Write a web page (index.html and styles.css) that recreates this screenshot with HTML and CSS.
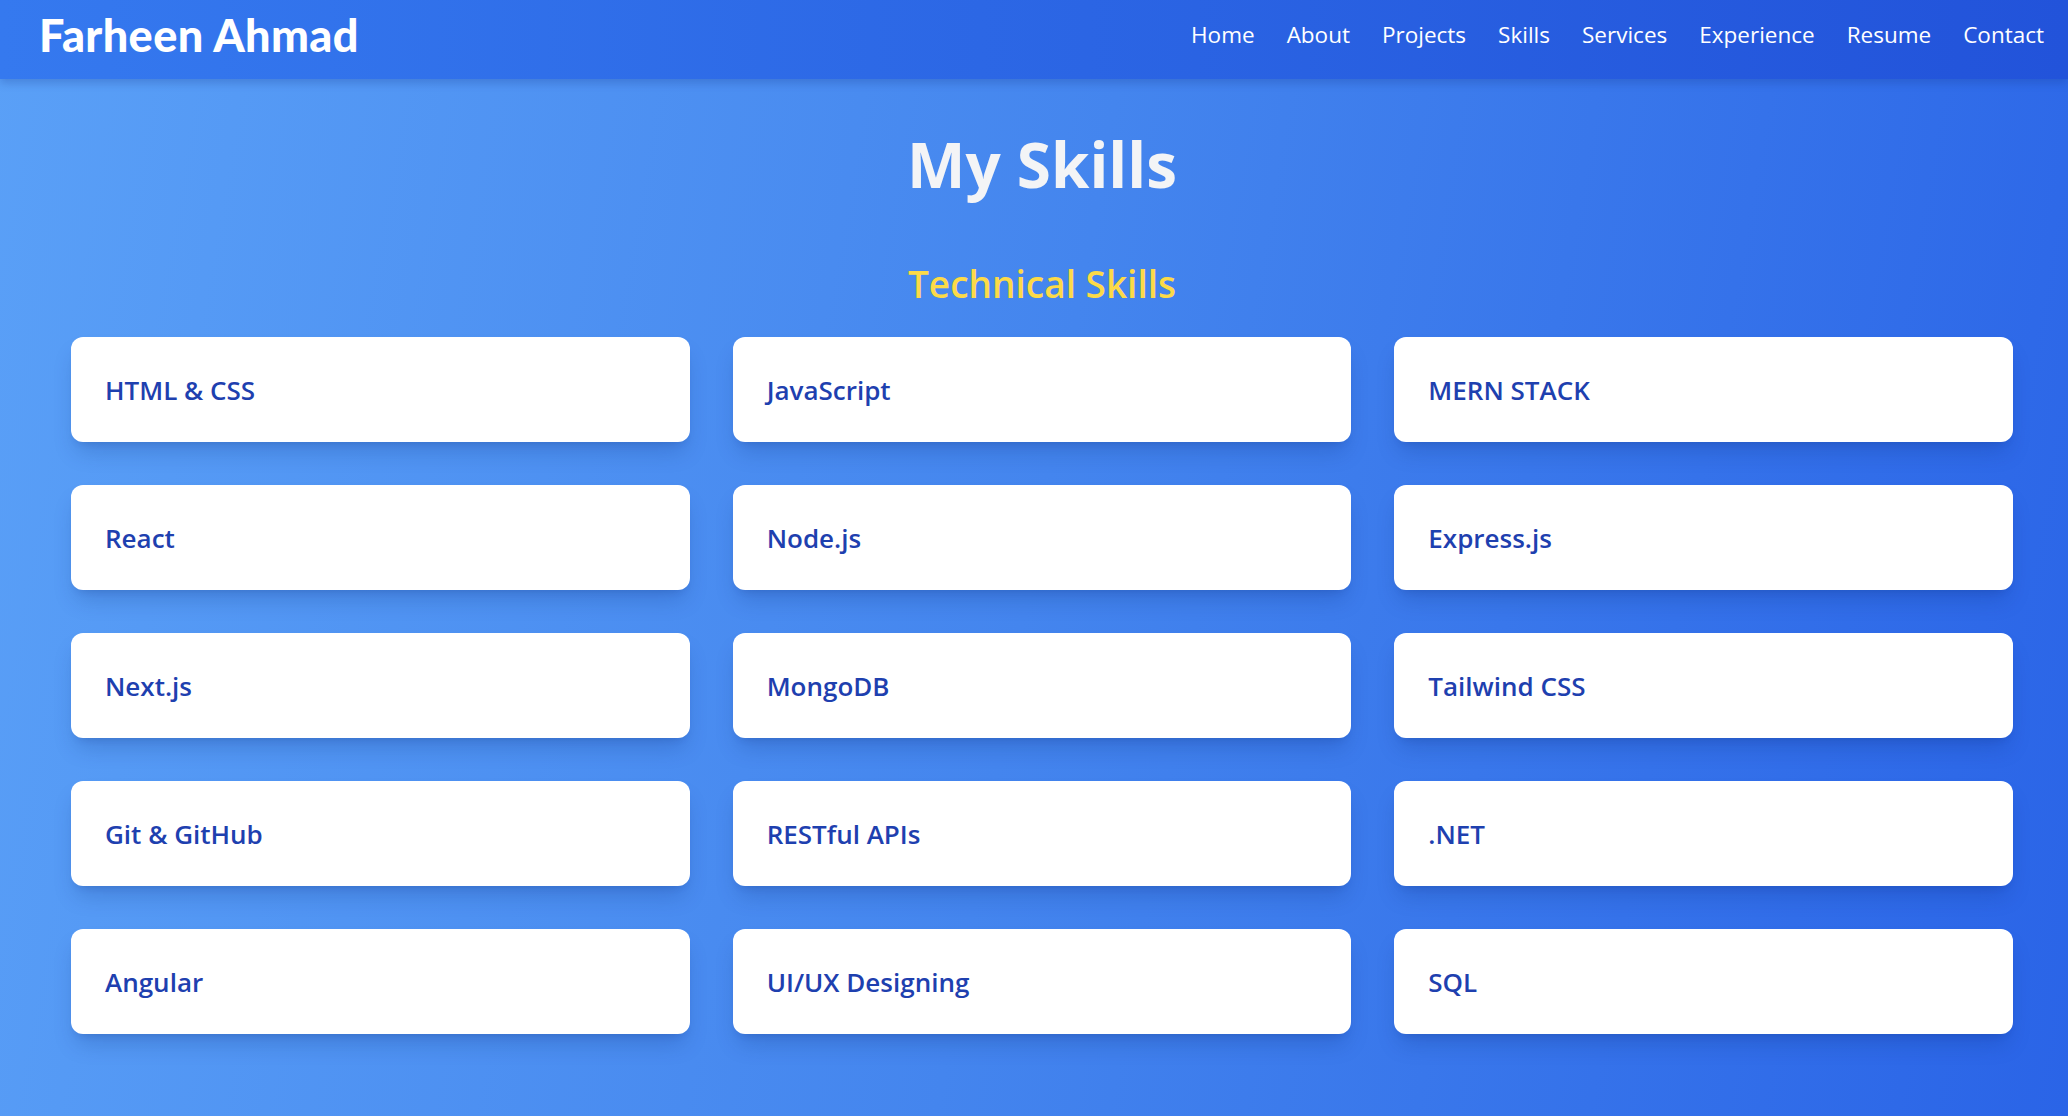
FILE: index.html
```html
<!DOCTYPE html>
<html lang="en">
<head>
<meta charset="utf-8">
<title>Farheen Ahmad - Skills</title>
<link rel="stylesheet" href="styles.css">
</head>
<body>
<header class="topbar">
  <div class="logo">Farheen Ahmad</div>
  <nav class="nav">
    <a href="#">Home</a>
    <a href="#">About</a>
    <a href="#">Projects</a>
    <a href="#">Skills</a>
    <a href="#">Services</a>
    <a href="#">Experience</a>
    <a href="#">Resume</a>
    <a href="#">Contact</a>
  </nav>
</header>
<main class="skills">
  <h1 class="title">My Skills</h1>
  <h2 class="subtitle">Technical Skills</h2>
  <div class="grid">
    <div class="card">HTML &amp; CSS</div>
    <div class="card">JavaScript</div>
    <div class="card">MERN STACK</div>
    <div class="card">React</div>
    <div class="card">Node.js</div>
    <div class="card">Express.js</div>
    <div class="card">Next.js</div>
    <div class="card">MongoDB</div>
    <div class="card">Tailwind CSS</div>
    <div class="card">Git &amp; GitHub</div>
    <div class="card">RESTful APIs</div>
    <div class="card">.NET</div>
    <div class="card">Angular</div>
    <div class="card">UI/UX Designing</div>
    <div class="card">SQL</div>
  </div>
</main>
</body>
</html>
```

FILE: styles.css
```css
* { box-sizing: border-box; }
html, body { margin: 0; padding: 0; }
body {
  font-family: "Open Sans", "Noto Sans", sans-serif;
  min-height: 1116px;
  background: linear-gradient(100deg, #5aa0f7 0%, #4485ee 50%, #2a64e7 100%);
  overflow: hidden;
}
.topbar {
  height: 79px;
  display: flex;
  align-items: center;
  justify-content: space-between;
  padding: 0 24px 0 39px;
  background: linear-gradient(to right, #3579ef, #2253da);
  box-shadow: 0 4px 8px rgba(20, 50, 140, 0.25);
  position: relative;
  z-index: 2;
}
.logo {
  font-family: "Lato", "Open Sans", sans-serif;
  font-weight: 900;
  font-size: 45px;
  color: #ffffff;
  letter-spacing: 0.4px;
  line-height: 1;
  margin-top: -9px;
}
.nav {
  display: flex;
  gap: 32px;
  margin-top: -8px;
}
.nav a {
  color: #ffffff;
  text-decoration: none;
  font-size: 22.5px;
  line-height: 1;
}
.skills {
  padding: 0 55px 60px 71px;
}
.title {
  margin: 0;
  padding-top: 45px;
  text-align: center;
  font-size: 62px;
  font-weight: 700;
  line-height: 80px;
  color: #f3f4f6;
}
.subtitle {
  margin: 56px 0 0;
  text-align: center;
  font-size: 37px;
  font-weight: 600;
  line-height: 48px;
  color: #fcda48;
}
.grid {
  margin-top: 29px;
  display: grid;
  grid-template-columns: repeat(3, 1fr);
  column-gap: 43px;
  row-gap: 43px;
}
.card {
  height: 105px;
  background: #ffffff;
  border-radius: 12px;
  display: flex;
  align-items: center;
  padding: 0 34px;
  font-size: 26px;
  font-weight: 600;
  color: #1e40af;
  box-shadow: 0 14px 22px -5px rgba(10, 40, 120, 0.22), 0 6px 9px -6px rgba(10, 40, 120, 0.2);
}
```
